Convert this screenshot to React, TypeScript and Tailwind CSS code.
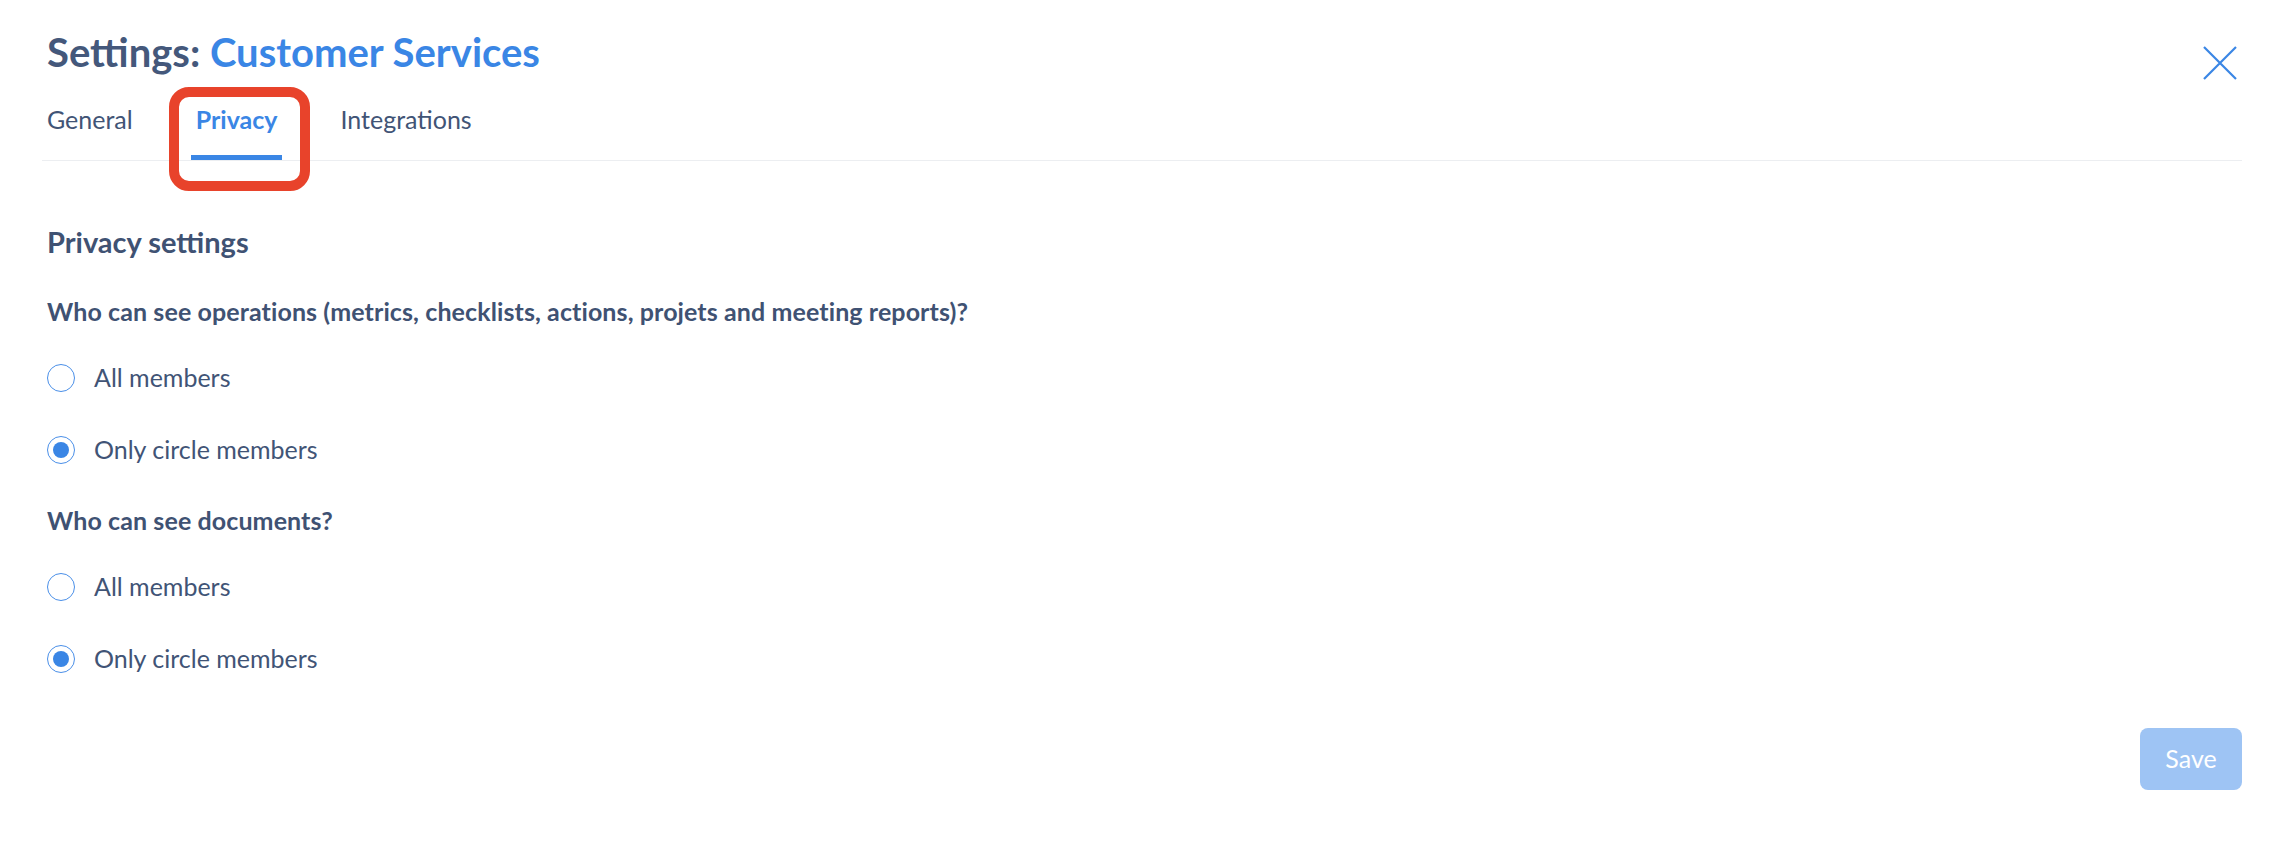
import React, { useState } from 'react';

type Choice = 'all' | 'circle';

const Radio = ({ checked, label, onClick }: { checked: boolean; label: string; onClick: () => void }) => (
  <button type="button" onClick={onClick} className="flex items-center gap-[19px] h-[29px] text-left">
    <span className="w-[28px] h-[28px] rounded-full border-[1.5px] border-[#4a8fe8] bg-white flex items-center justify-center shrink-0">
      {checked && <span className="w-[16px] h-[16px] rounded-full bg-[#3a86e5]"></span>}
    </span>
    <span className="text-[25px] leading-[29px] text-[#415476]">{label}</span>
  </button>
);

const Question = ({ title, value, onChange, className }: { title: string; value: Choice; onChange: (v: Choice) => void; className: string }) => (
  <div className={className}>
    <h3 className="text-[25px] leading-[29px] font-bold tracking-[0.1px] text-[#3f5273]">{title}</h3>
    <div className="mt-[37px] flex flex-col gap-[43px]">
      <Radio checked={value === 'all'} label="All members" onClick={() => onChange('all')} />
      <Radio checked={value === 'circle'} label="Only circle members" onClick={() => onChange('circle')} />
    </div>
  </div>
);

const App: React.FC = () => {
  const [ops, setOps] = useState<Choice>('circle');
  const [docs, setDocs] = useState<Choice>('circle');
  const tabs = ['General', 'Privacy', 'Integrations'];

  return (
    <div className="min-h-screen bg-white pt-[31px] pl-[47px] pr-[54px] font-['Lato','Noto_Sans',sans-serif]">
      {/* Header */}
      <div className="flex items-start justify-between h-[43px]">
        <h1 className="text-[40px] leading-[43px] font-bold text-[#44587b]">
          Settings: <span className="text-[#3a86e5]">Customer Services</span>
        </h1>
        <button type="button" className="mt-[15px] mr-[5px] text-[#3a86e5]">
          <svg width="34" height="34" viewBox="0 0 34 34" fill="none" stroke="currentColor" strokeWidth="2.2">
            <path d="M1 1L33 33M33 1L1 33" />
          </svg>
        </button>
      </div>

      {/* Tabs */}
      <div className="mt-[31px] -ml-[5px] flex gap-[53px] border-b border-[#eceef1]">
        {tabs.map(t => {
          const active = t === 'Privacy';
          return (
            <div
              key={t}
              className={`relative px-[5px] pb-[21px] border-b-[5px] text-[25px] leading-[29px] ${
                active ? 'border-[#3a86e5] text-[#3a86e5] font-bold' : 'border-transparent text-[#415476]'
              }`}
            >
              {t}
              {active && (
                <div className="absolute -left-[22px] -top-[18px] w-[141px] h-[104px] border-[10px] border-[#e8432b] rounded-[20px] pointer-events-none"></div>
              )}
            </div>
          );
        })}
      </div>

      {/* Body */}
      <h2 className="mt-[64px] text-[29px] leading-[34px] font-bold text-[#3f5273]">Privacy settings</h2>

      <Question
        className="mt-[38px]"
        title="Who can see operations (metrics, checklists, actions, projets and meeting reports)?"
        value={ops}
        onChange={setOps}
      />
      <Question className="mt-[42px]" title="Who can see documents?" value={docs} onChange={setDocs} />

      <div className="mt-[55px] flex justify-end">
        <button type="button" className="w-[102px] h-[62px] rounded-[8px] bg-[#9ec4f4] text-white text-[25px]">
          Save
        </button>
      </div>
    </div>
  );
};

export default App;
